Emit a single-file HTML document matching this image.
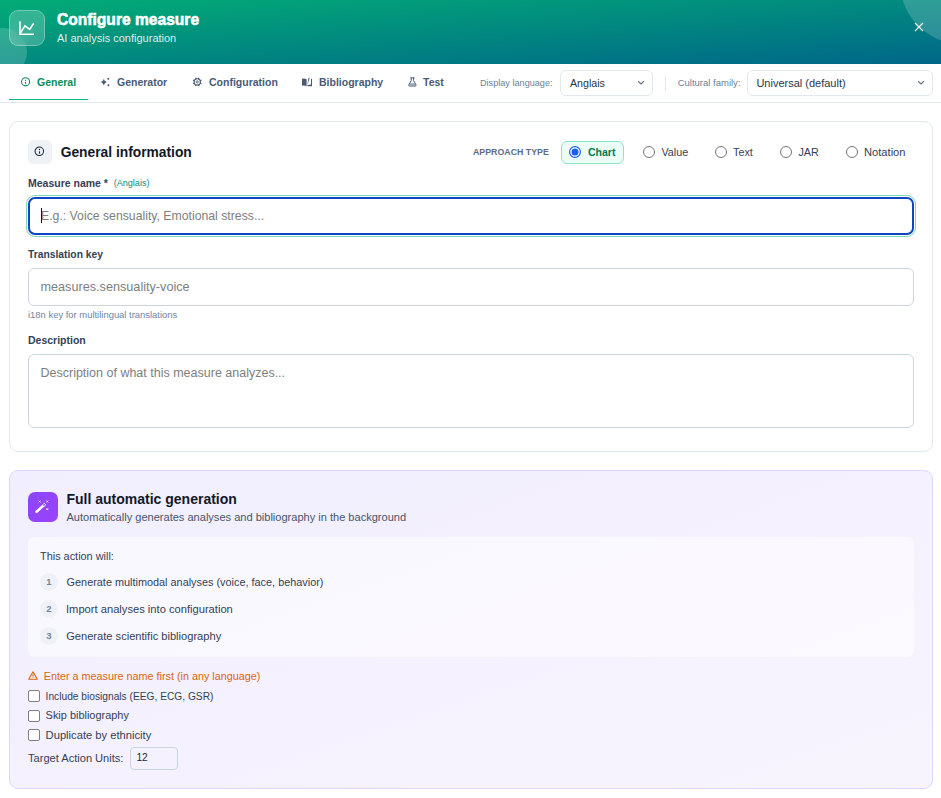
<!DOCTYPE html>
<html><head><meta charset="utf-8">
<style>
*{box-sizing:border-box;margin:0;padding:0}
html,body{width:941px;height:798px;overflow:hidden;background:#fff;font-family:"Liberation Sans",sans-serif}
#root{position:relative;width:941px;height:798px;overflow:hidden;background:#fff}
.a{position:absolute}
.t{position:absolute;white-space:nowrap;line-height:1}
.b{font-weight:bold}
/* header */
#hdr{left:0;top:0;width:941px;height:64px;background:linear-gradient(to bottom right,rgb(3,172,118),rgb(0,103,137));overflow:hidden}
.circ{position:absolute;border-radius:50%;background:rgba(255,255,255,0.18)}
#hicon{left:9px;top:10px;width:36px;height:36px;border-radius:9px;background:rgba(255,255,255,0.2);border:1px solid rgba(255,255,255,0.3);-webkit-backdrop-filter:blur(8px);backdrop-filter:blur(8px)}
/* tabs */
.tab{color:#4a5a75;font-size:10.5px}
.tab.on{color:#0a8c5a}
.lbl{color:#6b7f99}
.sel{position:absolute;border:1px solid #e2e8f0;border-radius:6px;background:#fff}
.card{position:absolute;border:1px solid #e2e8f0;border-radius:9px;background:#fff}
.inp{position:absolute;border:1px solid #cbd5e1;border-radius:6px;background:#fff}
.ph{color:#7e7e7e}
.radio{position:absolute;width:12px;height:12px;border-radius:50%;border:1px solid #767676;background:#fff}
.opt{color:#334155;font-size:10.8px}
.fl{color:#334155;font-size:10.5px}
.num{position:absolute;width:17.5px;height:18px;border-radius:50%;background:#eef2f7;color:#75849b;font-size:9.5px;line-height:17px;text-align:center;font-weight:bold}
.item{color:#334155;font-size:11px}
.cb{position:absolute;width:11.6px;height:11.6px;border:1px solid #808080;border-radius:2px;background:#fff}
.cbl{color:#334155;font-size:10.8px}
</style></head><body><div id="root">

<!-- HEADER -->
<div id="hdr" class="a">
  <div class="circ" style="left:-21px;top:28px;width:48px;height:48px"></div>
  <div class="circ" style="left:900px;top:-80px;width:124px;height:124px"></div>
  <div id="hicon" class="a">
    <svg class="a" style="left:8px;top:9px" width="18" height="18" viewBox="0 0 18 18" fill="none" stroke="#fff" stroke-width="1.6" stroke-linecap="butt" stroke-linejoin="miter">
      <path d="M2 1.3V14.2H16"/><path d="M2.2 13.2L6.9 5.9L11.7 9.4L15.7 3.3"/>
    </svg>
  </div>
  <div class="t b" style="left:57px;top:11.7px;font-size:15.6px;color:#fff;-webkit-text-stroke:0.55px #fff">Configure measure</div>
  <div class="t" style="left:57px;top:33px;font-size:11px;color:rgba(255,255,255,0.88)">AI analysis configuration</div>
  <svg class="a" style="left:914px;top:21.7px" width="10" height="10" viewBox="0 0 10 10" stroke="rgba(255,255,255,0.9)" stroke-width="1.2"><path d="M1 1L9 9M9 1L1 9"/></svg>
</div>

<!-- TABS -->
<div class="a" style="left:0;top:101.5px;width:941px;height:1px;background:#e2e8f0"></div>
<div class="a" style="left:9px;top:98.5px;width:79px;height:1.7px;background:#10b981"></div>
<svg class="a" style="left:20px;top:77px" width="11" height="11" viewBox="0 0 11 11" fill="none" stroke="#0a8c5a" stroke-width="1.05"><circle cx="5.6" cy="4.8" r="4.05"/><path d="M5.5 5V6.9" stroke-width="1.1"/><circle cx="5.5" cy="3.35" r="0.65" fill="#0a8c5a" stroke="none"/></svg>
<div id="tab1" class="t b tab on" style="left:37px;top:77.1px">General</div>
<svg class="a" style="left:100px;top:77px" width="11" height="11" viewBox="0 0 11 11" fill="#4a5a75"><path d="M3.8 2L4.9 4L6.9 5.1L4.9 6.2L3.8 8.2L2.7 6.2L0.7 5.1L2.7 4Z"/><path d="M8.3 0.6L8.9 1.2L9.5 1.8L8.9 2.4L8.3 3L7.7 2.4L7.1 1.8L7.7 1.2Z"/><path d="M8.4 7L9 7.6L9.6 8.2L9 8.8L8.4 9.4L7.8 8.8L7.2 8.2L7.8 7.6Z"/></svg>
<div id="tab2" class="t b tab" style="left:117px;top:77.1px">Generator</div>
<svg class="a" style="left:192px;top:77px" width="11" height="10" viewBox="0 0 11 10" fill="none" stroke="#4a5a75"><circle cx="5.25" cy="4.9" r="3.1" stroke-width="1.1"/><circle cx="5.25" cy="4.9" r="1.1" stroke-width="0.9"/><path d="M7.93 6.01L9.41 6.62M6.36 7.58L6.97 9.06M4.14 7.58L3.53 9.06M2.57 6.01L1.09 6.62M2.57 3.79L1.09 3.18M4.14 2.22L3.53 0.74M6.36 2.22L6.97 0.74M7.93 3.79L9.41 3.18" stroke-width="1.3"/></svg>
<div id="tab3" class="t b tab" style="left:209px;top:77.1px">Configuration</div>
<svg class="a" style="left:302px;top:77px" width="10" height="10" viewBox="0 0 10 10" fill="#4a5a75"><path d="M0 1.8Q2.5 1.2 4.6 2.2V9.2Q2.5 8.2 0 8.8Z"/><path d="M6.5 1L7.8 0.6L5.8 6.8L5.4 7.2Z"/><path d="M5.4 9.2V8L9 7.4V1.8H10V9.2Z"/></svg>
<div id="tab4" class="t b tab" style="left:319px;top:77.1px">Bibliography</div>
<svg class="a" style="left:407.5px;top:77px" width="9" height="10" viewBox="0 0 9 10" fill="none" stroke="#4a5a75" stroke-width="1"><path d="M3.2 0.8V3.6L0.8 7.9Q0.4 9 1.5 9H7.3Q8.4 9 8 7.9L5.6 3.6V0.8M2.3 0.8H6.5"/><path d="M2.2 6.2H6.6L7.5 8.3H1.3Z" fill="#4a5a75" fill-opacity="0.55" stroke="none"/></svg>
<div id="tab5" class="t b tab" style="left:423px;top:77.1px">Test</div>

<div id="dl" class="t lbl" style="left:480px;top:79px;font-size:9.15px">Display language:</div>
<div class="sel" style="left:560px;top:70px;width:93px;height:26px"></div>
<div id="ang" class="t" style="left:570px;top:78.3px;font-size:10.67px;color:#2b3648">Anglais</div>
<svg class="a" style="left:637.3px;top:80px" width="8" height="6" viewBox="0 0 8 6" fill="none" stroke="#6b7a90" stroke-width="1.15" stroke-linecap="round" stroke-linejoin="round"><path d="M1.5 1.5L4 4L6.5 1.5"/></svg>
<div class="a" style="left:665px;top:75.5px;width:1px;height:15px;background:#e2e8f0"></div>
<div id="cf" class="t lbl" style="left:677.7px;top:78.2px;font-size:9.5px">Cultural family:</div>
<div class="sel" style="left:747px;top:70px;width:186px;height:26px"></div>
<div id="univ" class="t" style="left:756.4px;top:78.3px;font-size:11px;color:#2b3648">Universal (default)</div>
<svg class="a" style="left:916.5px;top:80px" width="8" height="6" viewBox="0 0 8 6" fill="none" stroke="#6b7a90" stroke-width="1.15" stroke-linecap="round" stroke-linejoin="round"><path d="M1.5 1.5L4 4L6.5 1.5"/></svg>

<!-- CARD 1 -->
<div class="card" style="left:9px;top:121px;width:924px;height:331px"></div>
<div class="a" style="left:28px;top:140px;width:24px;height:24px;border-radius:6px;background:#eef2f7"></div>
<svg class="a" style="left:34px;top:146px" width="11" height="11" viewBox="0 0 11 11" fill="none" stroke="#1e293b" stroke-width="1.05"><circle cx="5.3" cy="5.3" r="4.25"/><path d="M5.5 5.3V7.7" stroke-width="1.1"/><circle cx="5.5" cy="3.45" r="0.68" fill="#1e293b" stroke="none"/></svg>
<div id="gi" class="t b" style="left:60.7px;top:145.8px;font-size:13.8px;color:#111827">General information</div>
<div id="at" class="t b" style="left:473px;top:148px;font-size:8.8px;color:#5b6b82">APPROACH TYPE</div>
<div class="a" style="left:561px;top:141px;width:63px;height:23px;border-radius:6px;border:1px solid #8ce6bf;background:#ecfdf5"></div>
<svg class="a" style="left:569px;top:146px" width="12" height="12" viewBox="0 0 12 12"><circle cx="6" cy="6" r="5.4" fill="#fff" stroke="#1a5cff" stroke-width="1.2"/><circle cx="6" cy="6" r="3.5" fill="#1a5cff"/></svg>
<div id="chart" class="t b" style="left:588px;top:146.7px;font-size:10.5px;color:#047857">Chart</div>
<div class="radio" style="left:643px;top:146px"></div>
<div id="val" class="t opt" style="left:661.4px;top:146.9px">Value</div>
<div class="radio" style="left:715px;top:146px"></div>
<div id="txt" class="t opt" style="left:733px;top:146.9px">Text</div>
<div class="radio" style="left:780px;top:146px"></div>
<div id="jar" class="t opt" style="left:798.4px;top:146.9px">JAR</div>
<div class="radio" style="left:846px;top:146px"></div>
<div id="not" class="t opt" style="left:864px;top:146.9px;font-size:11.15px">Notation</div>

<div id="mn" class="t b fl" style="left:28px;top:178.1px">Measure name *</div>
<div id="mna" class="t" style="left:113.7px;top:179.3px;font-size:9.07px;color:#0b8a7a">(Anglais)</div>
<div class="a" style="left:26px;top:195px;width:890px;height:42px;border-radius:9px;border:1px solid #80d8b8"></div>
<div class="a" style="left:28px;top:197px;width:886px;height:38px;border-radius:7px;border:2px solid #0c45c6;background:#fff"></div>
<div class="a" style="left:40.5px;top:208px;width:1px;height:15px;background:#111"></div>
<div id="ph1" class="t ph" style="left:41px;top:210.3px;font-size:12.25px">E.g.: Voice sensuality, Emotional stress...</div>

<div id="tk" class="t b fl" style="left:28px;top:249.9px;font-size:10.3px">Translation key</div>
<div class="inp" style="left:28px;top:268px;width:886px;height:38px"></div>
<div id="ph2" class="t ph" style="left:40.5px;top:281px;font-size:12.66px">measures.sensuality-voice</div>
<div id="i18" class="t" style="left:28px;top:309.6px;font-size:9.44px;color:#6f86a6">i18n key for multilingual translations</div>

<div id="desc" class="t b fl" style="left:28px;top:335.4px">Description</div>
<div class="inp" style="left:28px;top:354px;width:886px;height:74px"></div>
<div id="ph3" class="t ph" style="left:40.5px;top:367.1px;font-size:12.5px">Description of what this measure analyzes...</div>

<!-- CARD 2 -->
<div class="card" style="left:9px;top:470px;width:924px;height:319px;border-color:#ddd6fe;background:linear-gradient(to bottom right,#f1eefe,#f8f4fe)"></div>
<div class="a" style="left:28px;top:492px;width:30px;height:30px;border-radius:7px;background:linear-gradient(to bottom right,#8a46fc,#9a42fb)"></div>
<svg class="a" style="left:28px;top:492px" width="30" height="30" viewBox="0 0 30 30" fill="none" stroke="#fff"><path d="M8.6 19.8L14.4 14.4" stroke-width="2.6" stroke-linecap="round"/><path d="M14.3 13.2L16.3 11.3L17.8 12.9L15.8 14.8Z" stroke-width="0.9" stroke-linejoin="round"/><path d="M10.7 8.6L12.5 10.4M12.5 8.6L10.7 10.4M18.4 8.6L20.2 10.4M20.2 8.6L18.4 10.4M18.4 16.3L20.2 18.1M20.2 16.3L18.4 18.1" stroke-width="0.9"/></svg>
<div id="fag" class="t b" style="left:66.5px;top:492px;font-size:14px;color:#111827">Full automatic generation</div>
<div id="fags" class="t" style="left:66.5px;top:511.7px;font-size:11.05px;color:#475569">Automatically generates analyses and bibliography in the background</div>

<div class="a" style="left:28px;top:537px;width:886px;height:120px;border-radius:6px;background:rgba(255,255,255,0.55)"></div>
<div id="taw" class="t" style="left:40px;top:550.6px;font-size:10.9px;color:#334155">This action will:</div>
<div class="num" style="left:40.2px;top:573px">1</div>
<div id="it1" class="t item" style="left:66.6px;top:576.9px;font-size:10.88px">Generate multimodal analyses (voice, face, behavior)</div>
<div class="num" style="left:40.2px;top:600px">2</div>
<div id="it2" class="t item" style="left:66px;top:603.6px;font-size:11.17px">Import analyses into configuration</div>
<div class="num" style="left:40.2px;top:627px">3</div>
<div id="it3" class="t item" style="left:66.2px;top:630.7px;font-size:11.11px">Generate scientific bibliography</div>

<svg class="a" style="left:27.5px;top:670.9px" width="10" height="9" viewBox="0 0 10 9" fill="none" stroke="#d9660c" stroke-width="1.1"><path d="M5 0.8L9.3 8.3H0.7Z" stroke-linejoin="round"/><path d="M5 3.3V5.6M5 6.6V7.1"/></svg>
<div id="warn" class="t" style="left:43.7px;top:671.4px;font-size:10.8px;color:#d9660c">Enter a measure name first (in any language)</div>
<div class="cb" style="left:28px;top:690.2px"></div>
<div id="cb1" class="t cbl" style="left:45.6px;top:692px;font-size:10.21px">Include biosignals (EEG, ECG, GSR)</div>
<div class="cb" style="left:28px;top:710px"></div>
<div id="cb2" class="t cbl" style="left:45.6px;top:710.3px;font-size:10.95px">Skip bibliography</div>
<div class="cb" style="left:28px;top:729px"></div>
<div id="cb3" class="t cbl" style="left:45.6px;top:729.8px;font-size:11.2px">Duplicate by ethnicity</div>
<div id="tau" class="t" style="left:28px;top:753.3px;font-size:11.08px;color:#334155">Target Action Units:</div>
<div class="inp" style="left:130px;top:747px;width:48px;height:23px;border-radius:4px;background:transparent;border-color:#c8d4e0"></div>
<div id="n12" class="t" style="left:136.4px;top:753.3px;font-size:10.2px;color:#1e293b">12</div>

</div></body></html>
